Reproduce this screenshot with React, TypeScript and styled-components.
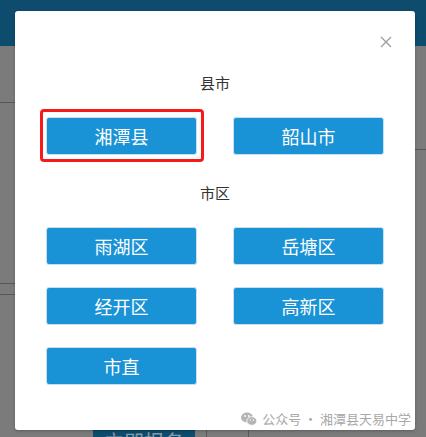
import React from 'react';
import styled, { createGlobalStyle } from 'styled-components';

const GlobalStyle = createGlobalStyle`
  html, body {
    margin: 0;
    padding: 0;
    width: 426px;
    height: 437px;
    overflow: hidden;
    font-family: "Noto Sans CJK SC", "Noto Sans", sans-serif;
  }
`;

const Page = styled.div`
  position: relative;
  width: 426px;
  height: 437px;
  overflow: hidden;
  background: #7b7b7b;
  display: flex;
  flex-direction: column;
`;

const TopBar = styled.div`
  height: 46px;
  background: #0d4c6d;
  flex-shrink: 0;
`;

const Body = styled.div`
  flex: 1;
  display: flex;
  flex-direction: row;
`;

const SideCol = styled.div<{ $w: number }>`
  width: ${(p) => p.$w}px;
  display: flex;
  flex-direction: column;
`;

const Cell = styled.div<{ $h: number }>`
  height: ${(p) => p.$h}px;
  border-bottom: 1px solid #575757;
  flex-shrink: 0;
`;

const Middle = styled.div`
  flex: 1;
  display: flex;
  flex-direction: column;
  justify-content: flex-end;
`;

const Footer = styled.div`
  height: 10px;
  display: flex;
  padding-left: 78px;
`;

const ApplyBtn = styled.div`
  width: 102px;
  background: #0d4c6d;
  color: #8a9aa5;
  font-size: 20px;
  line-height: 30px;
  text-align: center;
  overflow: hidden;
  white-space: nowrap;
`;

const FooterCell = styled.div<{ $w: number }>`
  width: ${(p) => p.$w}px;
  border-right: 1px solid #5a5a5a;
`;

const Modal = styled.div`
  position: absolute;
  left: 15px;
  top: 11px;
  width: 400px;
  height: 419px;
  background: #fff;
  border-radius: 3px;
  box-shadow: 0 1px 3px rgba(0, 0, 0, 0.25);
  box-sizing: border-box;
  padding-top: 62px;
  display: flex;
  flex-direction: column;
  align-items: center;
`;

const Close = styled.div`
  position: absolute;
  top: 25px;
  right: 23px;
  width: 12px;
  height: 12px;
  display: flex;
`;

const Title = styled.div<{ $top?: number }>`
  font-size: 15px;
  line-height: 20px;
  color: #333;
  margin-top: ${(p) => p.$top ?? 0}px;
  margin-bottom: 24px;
`;

const Grid = styled.div`
  display: grid;
  grid-template-columns: 151px 151px;
  column-gap: 36px;
  row-gap: 22px;
`;

const AreaButton = styled.button<{ $picked?: boolean }>`
  position: relative;
  height: 38px;
  border: 1px solid #c9dff0;
  border-radius: 3px;
  background: #1993d6;
  color: #fff;
  font-family: "Noto Sans CJK SC", sans-serif;
  font-size: 18px;
  padding: 0;
  cursor: pointer;

  &::after {
    content: '';
    display: ${(p) => (p.$picked ? 'block' : 'none')};
    position: absolute;
    left: -7px;
    right: -8px;
    top: -9px;
    bottom: -8px;
    border: 3px solid #f51b1b;
    border-radius: 4px;
  }
`;

const Watermark = styled.div`
  position: absolute;
  right: 4px;
  bottom: 2px;
  display: flex;
  align-items: center;
  gap: 5px;
  color: #a8a8a8;
  font-size: 13px;
  line-height: 18px;
  white-space: nowrap;
`;

const WeChatIcon = () => (
  <svg width="16" height="14" viewBox="0 0 16 14">
    <ellipse cx="6" cy="5.5" rx="6" ry="5" fill="#b5b5b5" />
    <ellipse cx="10.8" cy="9" rx="5" ry="4.3" fill="#b5b5b5" stroke="#fff" strokeWidth="0.8" />
    <circle cx="4" cy="4" r="0.9" fill="#fff" />
    <circle cx="7.8" cy="4" r="0.9" fill="#fff" />
    <circle cx="9.2" cy="8" r="0.7" fill="#fff" />
    <circle cx="12.4" cy="8" r="0.7" fill="#fff" />
  </svg>
);

const counties = ['湘潭县', '韶山市'];
const districts = ['雨湖区', '岳塘区', '经开区', '高新区', '市直'];

export default function App() {
  return (
    <>
      <GlobalStyle />
      <Page>
        <TopBar />
        <Body>
          <SideCol $w={15}>
            <Cell $h={56} />
            <Cell $h={180} />
            <Cell $h={10} />
          </SideCol>
          <Middle>
            <Footer>
              <ApplyBtn>立即报名</ApplyBtn>
              <FooterCell $w={11} />
              <FooterCell $w={41} />
            </Footer>
          </Middle>
          <SideCol $w={11}>
            <Cell $h={103} />
          </SideCol>
        </Body>

        <Modal>
          <Close>
            <svg width="12" height="12" viewBox="0 0 12 12">
              <path d="M1 1 L11 11 M11 1 L1 11" stroke="#9a9a9a" strokeWidth="1.2" />
            </svg>
          </Close>
          <Title>县市</Title>
          <Grid>
            {counties.map((c, i) => (
              <AreaButton key={c} $picked={i === 0}>
                {c}
              </AreaButton>
            ))}
          </Grid>
          <Title $top={28}>市区</Title>
          <Grid>
            {districts.map((d) => (
              <AreaButton key={d}>{d}</AreaButton>
            ))}
          </Grid>
          <Watermark>
            <WeChatIcon />
            <span>公众号 · 湘潭县天易中学</span>
          </Watermark>
        </Modal>
      </Page>
    </>
  );
}
